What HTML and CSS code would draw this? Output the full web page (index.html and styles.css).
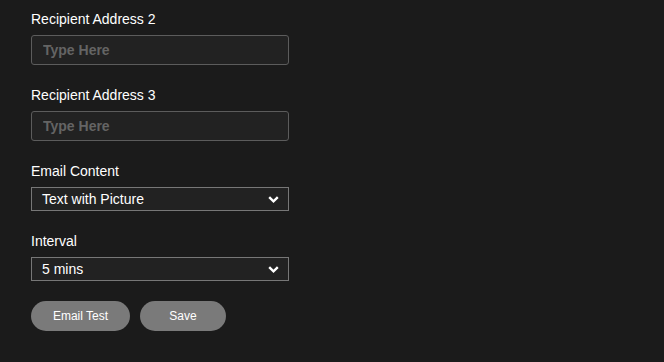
FILE: index.html
```html
<!DOCTYPE html>
<html lang="en">
<head>
    <meta charset="UTF-8">
    <meta name="viewport" content="width=device-width, initial-scale=1.0">
    <title>Email Settings</title>
    <link rel="stylesheet" href="styles.css">
</head>
<body>
    <form class="settings-form">
        <div class="form-group">
            <label for="addr2">Recipient Address 2</label>
            <input type="text" id="addr2" placeholder="Type Here">
        </div>

        <div class="form-group">
            <label for="addr3">Recipient Address 3</label>
            <input type="text" id="addr3" placeholder="Type Here">
        </div>

        <div class="form-group">
            <label>Email Content</label>
            <div class="select">
                <span>Text with Picture</span>
                <svg class="chevron" width="11" height="7" viewBox="0 0 11 7"><path d="M1.2 1.2 L5.5 5.3 L9.8 1.2" fill="none" stroke="#fff" stroke-width="2.4"/></svg>
            </div>
        </div>

        <div class="form-group last">
            <label>Interval</label>
            <div class="select">
                <span>5 mins</span>
                <svg class="chevron" width="11" height="7" viewBox="0 0 11 7"><path d="M1.2 1.2 L5.5 5.3 L9.8 1.2" fill="none" stroke="#fff" stroke-width="2.4"/></svg>
            </div>
        </div>

        <div class="actions">
            <button type="button" class="btn btn-test">Email Test</button>
            <button type="button" class="btn btn-save">Save</button>
        </div>
    </form>
</body>
</html>
```

FILE: styles.css
```css
* {
    margin: 0;
    padding: 0;
    box-sizing: border-box;
}

body {
    font-family: 'Liberation Sans', Arial, sans-serif;
    background: #1b1b1b;
    color: #fff;
    min-height: 100vh;
}

.settings-form {
    width: 258px;
    margin-left: 31px;
    padding-top: 11px;
}

.form-group {
    margin-bottom: 22px;
}

.form-group.last {
    margin-bottom: 20px;
}

.form-group label {
    display: block;
    font-size: 14px;
    line-height: 16px;
    margin-bottom: 8px;
    color: #fff;
}

.form-group input {
    display: block;
    width: 100%;
    height: 30px;
    padding: 0 11px;
    border: 1px solid #5c5c5c;
    border-radius: 3px;
    background: #222;
    color: #fff;
    font-family: inherit;
    font-size: 14px;
    font-weight: bold;
    outline: none;
}

.form-group input::placeholder {
    color: #646464;
}

.select {
    display: flex;
    align-items: center;
    justify-content: space-between;
    height: 24px;
    padding: 0 9px 1px 10px;
    border: 1px solid #777;
    background: #222;
    font-size: 14px;
}

.chevron {
    margin-top: 1px;
}

.actions {
    display: flex;
    gap: 10px;
}

.btn {
    height: 30px;
    border: none;
    border-radius: 15px;
    background: #7a7a7a;
    color: #fff;
    font-family: inherit;
    font-size: 12px;
    cursor: pointer;
}

.btn-test {
    width: 99px;
}

.btn-save {
    width: 86px;
}
```
